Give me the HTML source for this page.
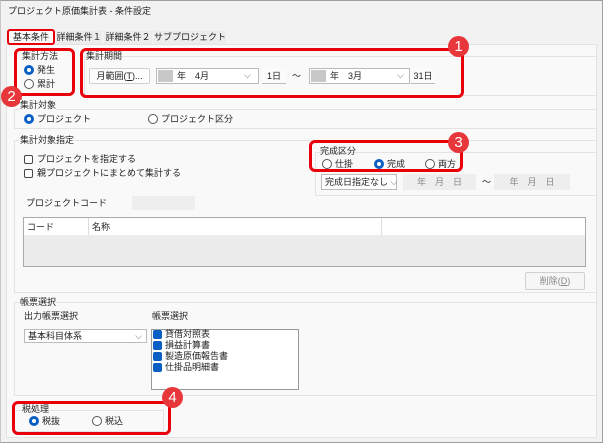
<!DOCTYPE html><html><head><meta charset="utf-8"><style>
*{box-sizing:border-box;margin:0;padding:0}
body{width:603px;height:443px;overflow:hidden;background:#f2f2f2;font-family:"Liberation Sans","Noto Sans CJK JP",sans-serif;font-size:9px;line-height:11px;color:#222;position:relative;white-space:nowrap}
div{white-space:nowrap}
.a{position:absolute}
.win{position:absolute;left:0;top:0;width:603px;height:443px;border:1px solid #a0a0a0;border-left-color:#c8c8c8}
.panel{position:absolute;left:6px;top:44px;width:591px;height:394px;background:#f9f9f9;border:1px solid #e3e3e3}
.grp{position:absolute;border:1px solid #e3e3e3}
.red{position:absolute;border:3px solid #e8000b;border-radius:6px}
.num{position:absolute;width:21px;height:21px;border-radius:50%;background:#e8373a;color:#fff;font-size:15px;text-align:center;line-height:21px;font-family:"Liberation Sans",sans-serif}
.rad{position:absolute;width:10px;height:10px;border-radius:50%;border:1px solid #555;background:#fff}
.rad.on{border:3px solid #0a5fc4}
.chk{position:absolute;width:9px;height:9px;border:1px solid #444;border-radius:2px;background:#fff}
.chk.on{background:#0a5fc4;border-color:#0a5fc4}
.box{position:absolute;background:#fff;border:1px solid #bbb}
.gray{position:absolute;background:#eeeeee}
.btn{position:absolute;background:#fdfdfd;border:1px solid #d0d0d0;border-radius:2px;text-align:center}
.tab{position:absolute;top:31px;height:13px;background:#ececec;text-align:center;line-height:13px}
</style></head><body>
<div class="win"></div>
<div class="a" style="left:8px;top:6px">プロジェクト原価集計表 - 条件設定</div>
<div class="panel"></div>
<div class="tab" style="left:8px;width:46px;background:#f9f9f9">基本条件</div>
<div class="tab" style="left:56px;width:46px">詳細条件１</div>
<div class="tab" style="left:104px;width:48px">詳細条件２</div>
<div class="tab" style="left:154px;width:72px">サブプロジェクト</div>
<div class="red" style="left:7px;top:29px;width:48px;height:16px;border-width:2px;border-radius:3px"></div>

<div class="a" style="left:22px;top:51px">集計方法</div>
<div class="rad on" style="left:24px;top:65px"></div><div class="a" style="left:37px;top:65px">発生</div>
<div class="rad" style="left:24px;top:79px"></div><div class="a" style="left:37px;top:79px">累計</div>
<div class="red" style="left:14px;top:48px;width:61px;height:48px"></div>
<div class="num" style="left:1px;top:86px">2</div>

<div class="grp" style="left:84px;top:56px;width:513px;height:40px"></div>
<div class="a" style="left:86px;top:51px">集計期間</div>
<div class="btn" style="left:89px;top:68px;width:61px;height:16px;line-height:14px">月範囲(<u>T</u>)...</div>
<div class="box" style="left:156px;top:68px;width:103px;height:16px"></div>
<div class="gray" style="left:158px;top:70px;width:15px;height:12px;background:#c8c8c8"></div>
<div class="a" style="left:177px;top:71px">年　4月</div><div class="a" style="left:244px;top:70px;color:#666">⌵</div>
<div class="a" style="left:262px;top:68px;width:24px;height:16px;border-bottom:1px solid #bbb;background:#fbfbfb;text-align:center;line-height:16px">1日</div>
<div class="a" style="left:292px;top:71px">～</div>
<div class="box" style="left:309px;top:68px;width:101px;height:16px"></div>
<div class="gray" style="left:311px;top:70px;width:15px;height:12px;background:#c8c8c8"></div>
<div class="a" style="left:330px;top:71px">年　3月</div><div class="a" style="left:397px;top:70px;color:#666">⌵</div>
<div class="a" style="left:411px;top:68px;width:24px;height:16px;border-bottom:1px solid #bbb;background:#fbfbfb;text-align:center;line-height:16px">31日</div>
<div class="red" style="left:80px;top:48px;width:384px;height:50px"></div>
<div class="num" style="left:448px;top:36px">1</div>

<div class="grp" style="left:14px;top:109px;width:583px;height:20px"></div>
<div class="a" style="left:20px;top:100px;background:#f9f9f9">集計対象</div>
<div class="rad on" style="left:24px;top:114px"></div><div class="a" style="left:37px;top:114px">プロジェクト</div>
<div class="rad" style="left:148px;top:114px"></div><div class="a" style="left:161px;top:114px">プロジェクト区分</div>

<div class="grp" style="left:14px;top:140px;width:583px;height:153px"></div>
<div class="a" style="left:20px;top:135px;background:#f9f9f9">集計対象指定</div>
<div class="chk" style="left:24px;top:155px"></div><div class="a" style="left:37px;top:154px">プロジェクトを指定する</div>
<div class="chk" style="left:24px;top:169px"></div><div class="a" style="left:37px;top:168px">親プロジェクトにまとめて集計する</div>
<div class="grp" style="left:315px;top:152px;width:282px;height:44px"></div>
<div class="a" style="left:320px;top:146px">完成区分</div>
<div class="rad" style="left:322px;top:159px"></div><div class="a" style="left:335px;top:159px">仕掛</div>
<div class="rad on" style="left:374px;top:159px"></div><div class="a" style="left:387px;top:159px">完成</div>
<div class="rad" style="left:425px;top:159px"></div><div class="a" style="left:438px;top:159px">両方</div>
<div class="red" style="left:309px;top:140px;width:154px;height:32px"></div>
<div class="num" style="left:448px;top:132px">3</div>
<div class="box" style="left:321px;top:174px;width:76px;height:16px;padding-left:3px;line-height:14px">完成日指定なし <span style="color:#666">⌵</span></div>
<div class="gray" style="left:403px;top:174px;width:73px;height:16px;color:#888;text-align:center;line-height:16px">年　月　日</div>
<div class="a" style="left:482px;top:177px">～</div>
<div class="gray" style="left:494px;top:174px;width:76px;height:16px;color:#888;text-align:center;line-height:16px">年　月　日</div>
<div class="a" style="left:26px;top:198px">プロジェクトコード</div>
<div class="gray" style="left:132px;top:196px;width:63px;height:14px"></div>
<div class="a" style="left:23px;top:217px;width:563px;height:50px;border:1px solid #aaa;background:#ececec"></div>
<div class="a" style="left:24px;top:218px;width:561px;height:17px;background:#fff"></div>
<div class="a" style="left:88px;top:218px;width:1px;height:17px;background:#ddd"></div>
<div class="a" style="left:381px;top:218px;width:1px;height:17px;background:#ddd"></div>
<div class="a" style="left:27px;top:222px">コード</div><div class="a" style="left:92px;top:222px">名称</div>
<div class="btn" style="left:525px;top:272px;width:60px;height:18px;line-height:16px;color:#888;background:#f6f6f6">削除(<u>D</u>)</div>

<div class="grp" style="left:14px;top:302px;width:583px;height:94px"></div>
<div class="a" style="left:20px;top:297px;background:#f9f9f9">帳票選択</div>
<div class="a" style="left:24px;top:311px">出力帳票選択</div>
<div class="a" style="left:152px;top:311px">帳票選択</div>
<div class="box" style="left:24px;top:329px;width:123px;height:14px;padding-left:3px;line-height:12px">基本科目体系<span style="position:absolute;right:4px;color:#666">⌵</span></div>
<div class="box" style="left:151px;top:329px;width:148px;height:61px;border-color:#999"></div>
<div class="chk on" style="left:153px;top:330px"></div><div class="a" style="left:165px;top:329px">貸借対照表</div>
<div class="chk on" style="left:153px;top:341px"></div><div class="a" style="left:165px;top:340px">損益計算書</div>
<div class="chk on" style="left:153px;top:352px"></div><div class="a" style="left:165px;top:351px">製造原価報告書</div>
<div class="chk on" style="left:153px;top:363px"></div><div class="a" style="left:165px;top:362px">仕掛品明細書</div>

<div class="grp" style="left:14px;top:410px;width:150px;height:22px"></div>
<div class="a" style="left:22px;top:404px">税処理</div>
<div class="rad on" style="left:29px;top:416px"></div><div class="a" style="left:42px;top:416px">税抜</div>
<div class="rad" style="left:92px;top:416px"></div><div class="a" style="left:105px;top:416px">税込</div>
<div class="red" style="left:12px;top:401px;width:159px;height:34px"></div>
<div class="num" style="left:162px;top:387px">4</div>
</body></html>
